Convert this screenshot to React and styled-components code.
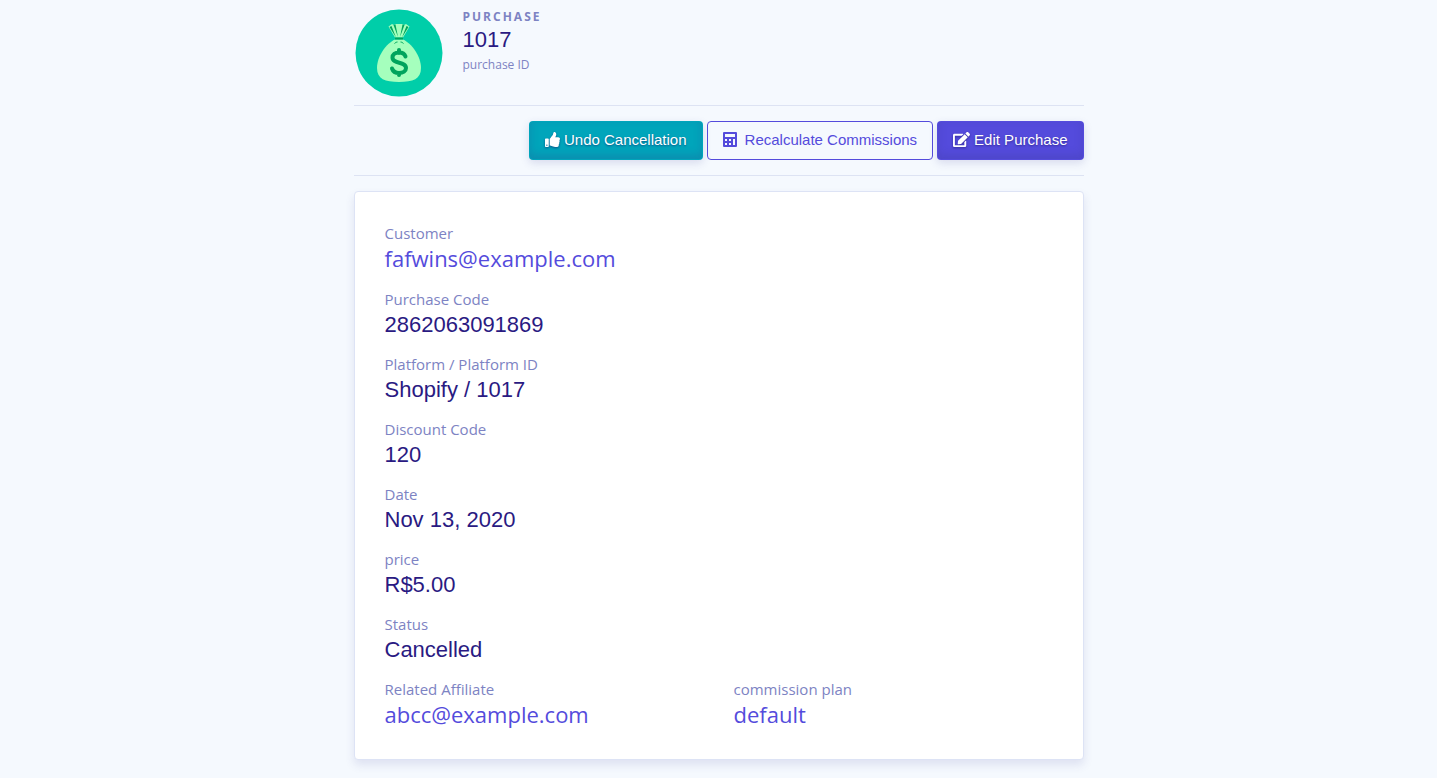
import React from "react";
import styled, { createGlobalStyle, css } from "styled-components";
import { FaThumbsUp, FaEdit } from "react-icons/fa";

const GlobalStyle = createGlobalStyle`
  *, *::before, *::after { box-sizing: border-box; }
  body {
    margin: 0;
    background: #f5f9fe;
    color: #7d83c3;
    font: 15px/22px "Open Sans", sans-serif;
  }
`;

const Page = styled.main`
  max-width: 730px;
  margin: 0 auto;
  padding: 9px 0 18px;
`;

const Header = styled.header`
  display: flex;
  align-items: flex-start;
  gap: 20px;
  padding-bottom: 8px;
  border-bottom: 1px solid #dde3f3;
`;

const Avatar = styled.svg`
  display: block;
  flex: none;
  width: 88px;
  height: 88px;
  margin-left: 1px;
`;

const Eyebrow = styled.div`
  font-size: 12px;
  font-weight: 700;
  line-height: 16px;
  letter-spacing: 2px;
  text-transform: uppercase;
`;

const Title = styled.h1`
  margin: 0;
  color: #2a1a82;
  font: 400 22px/30px "Liberation Sans", sans-serif;
`;

const Caption = styled.div`
  font-size: 12px;
  line-height: 20px;
`;

const Toolbar = styled.div`
  display: flex;
  flex-wrap: wrap;
  justify-content: flex-end;
  gap: 4px;
  padding: 15px 0;
  border-bottom: 1px solid #dde3f3;
`;

const solid = css`
  color: #fff;
  text-shadow: 0 1px 2px rgba(20, 10, 90, 0.5);
  box-shadow: inset 0 -4px 8px rgba(55, 55, 130, 0.22), 0 3px 8px rgba(60, 60, 150, 0.16);
  svg { filter: drop-shadow(0 1px 1px rgba(20, 10, 90, 0.5)); }
`;

const tones = {
  info: css`background: #00a5bb; border-color: transparent; ${solid}`,
  primary: css`background: #544bdc; border-color: transparent; ${solid}`,
  outline: css`background: transparent; border-color: #544bdc; color: #544bdc;`,
};

const Button = styled.button`
  display: inline-flex;
  align-items: center;
  gap: ${(p) => p.$gap}px;
  height: 39px;
  padding: 0 15px 2px;
  border: 1px solid;
  border-radius: 4px;
  font: 15px/22px "Liberation Sans", sans-serif;
  cursor: pointer;
  svg { flex: none; display: block; }
  ${(p) => tones[p.$tone]}
`;

const Card = styled.section`
  margin-top: 15px;
  padding: 30px 30px 28px;
  background: #fff;
  border: 1px solid #dde3f5;
  border-radius: 4px;
  box-shadow: 0 5px 10px rgba(60, 60, 150, 0.12);
`;

const Details = styled.dl`
  display: grid;
  grid-template-columns: 1fr 1fr;
  column-gap: 30px;
  row-gap: 13px;
  margin: 0;
`;

const Field = styled.div`
  grid-column: ${(p) => (p.$half ? "auto" : "1 / -1")};
`;

const Label = styled.dt`
  font-size: 15px;
  line-height: 22px;
`;

const Value = styled.dd`
  margin: 0;
  color: #2a1a82;
  font: 22px/30px "Liberation Sans", sans-serif;
`;

const ValueLink = styled.a`
  display: block;
  width: fit-content;
  padding-bottom: 3px;
  color: #544bdc;
  font: 22px/28px "Open Sans", sans-serif;
  text-decoration: none;
`;

function MoneyBag() {
  return (
    <Avatar viewBox="0 0 88 88" aria-hidden="true">
      <circle cx="44" cy="44" r="43.500" fill="#00cea9" />
      <path d="M33.500 17.500 37 15l2 1 2-1h6l2 1 2-1 3.500 2.500L48 28.500h-8z" fill="#a5ffbd" />
      <path d="M34.500 18l6.500 10.500L36.500 17zM38.500 16l4.500 12-2.500-12.500zM49.500 16L45 28l2.500-12.500zM53.500 18L47 28.500 51.500 17z" fill="#00a45d" />
      <path d="M40 30.500h8c9 4 18 17 18 28.500 0 11-8 14-22 14s-22-3-22-14c0-11.500 9-24.500 18-28.500z" fill="#a5ffbd" />
      <path d="M40 29.500h8" stroke="#00a45d" strokeWidth="2" />
      <path d="M39.500 34.500c1-1 2-1.500 3-1.500M48.500 34.500c-1-1-2-1.500-3-1.500" fill="none" stroke="#00a45d" strokeWidth="1" />
      <path d="M50.500 47.500c-1-3-3.500-4-6.500-4-4 0-6.500 2-6.500 5 0 7 13.500 3.500 13.500 10.500 0 3-3 5-7 5-3.500 0-6-1.500-7-4.500M44 41v3M44 64v2" fill="none" stroke="#00a45d" strokeWidth="4" strokeLinecap="round" />
    </Avatar>
  );
}

function CalculatorIcon() {
  return (
    <svg width="14" height="15" viewBox="0 0 14 15" aria-hidden="true">
      <path fill="currentColor" fillRule="evenodd" d="M1 0h12a1 1 0 0 1 1 1v13a1 1 0 0 1-1 1H1a1 1 0 0 1-1-1V1a1 1 0 0 1 1-1zM2 2v3h10V2zM2 7v2h2V7zM6 7v2h2V7zM10 7v2h2V7zM2 11v2h2v-2zM6 11v2h2v-2zM10 9v4h2V9z" />
    </svg>
  );
}

const fields = [
  { label: "Customer", value: "fafwins@example.com", link: true },
  { label: "Purchase Code", value: "2862063091869" },
  { label: "Platform / Platform ID", value: "Shopify / 1017" },
  { label: "Discount Code", value: "120" },
  { label: "Date", value: "Nov 13, 2020" },
  { label: "price", value: "R$5.00" },
  { label: "Status", value: "Cancelled" },
  { label: "Related Affiliate", value: "abcc@example.com", link: true, half: true },
  { label: "commission plan", value: "default", link: true, half: true },
];

export default function App() {
  return (
    <>
      <GlobalStyle />
      <Page>
        <Header>
          <MoneyBag />
          <div>
            <Eyebrow>Purchase</Eyebrow>
            <Title>1017</Title>
            <Caption>purchase ID</Caption>
          </div>
        </Header>
        <Toolbar>
          <Button type="button" $tone="info" $gap={4}>
            <FaThumbsUp size={15} aria-hidden="true" />
            Undo Cancellation
          </Button>
          <Button type="button" $tone="outline" $gap={8}>
            <CalculatorIcon />
            Recalculate Commissions
          </Button>
          <Button type="button" $tone="primary" $gap={4}>
            <FaEdit size={17} aria-hidden="true" />
            Edit Purchase
          </Button>
        </Toolbar>
        <Card>
          <Details>
            {fields.map((f) => (
              <Field key={f.label} $half={f.half}>
                <Label>{f.label}</Label>
                <Value>{f.link ? <ValueLink href="#">{f.value}</ValueLink> : f.value}</Value>
              </Field>
            ))}
          </Details>
        </Card>
      </Page>
    </>
  );
}
